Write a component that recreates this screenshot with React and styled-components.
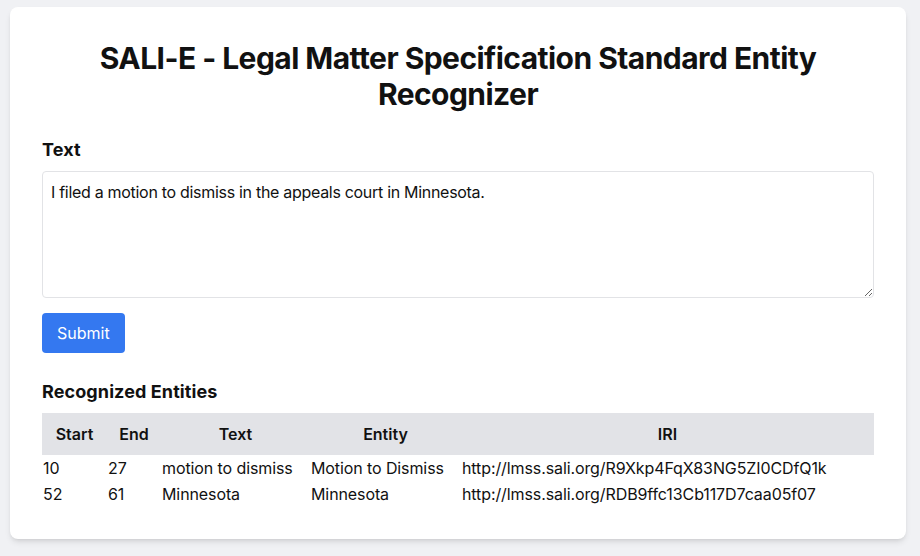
import React, { useState } from 'react';
import styled, { createGlobalStyle } from 'styled-components';

const GlobalStyle = createGlobalStyle`
  * { box-sizing: border-box; }
  body {
    margin: 0;
    background: #f0f1f4;
    font-family: Inter, "Liberation Sans", sans-serif;
    color: #111;
  }
`;

const Page = styled.div`
  padding: 7px 14px 18px 10px;
`;

const Card = styled.div`
  width: 896px;
  background: #fff;
  border-radius: 8px;
  box-shadow: 0 4px 6px -1px rgba(0, 0, 0, 0.1), 0 2px 4px -2px rgba(0, 0, 0, 0.1);
  padding: 33px 32px 32px;
`;

const Title = styled.h1`
  margin: 0 0 24px;
  font-size: 30px;
  line-height: 36px;
  font-weight: 700;
  text-align: center;
  letter-spacing: -0.55px;
`;

const Label = styled.h2`
  margin: 0 0 7px;
  font-size: 18px;
  line-height: 28px;
  font-weight: 700;
  letter-spacing: 0.1px;
`;

const TextArea = styled.textarea`
  display: block;
  width: 100%;
  height: 127px;
  padding: 8px;
  border: 1px solid #e2e3e6;
  border-radius: 4px;
  font-family: inherit;
  font-size: 16px;
  line-height: 24px;
  letter-spacing: -0.3px;
  color: #111;
  resize: vertical;
  outline: none;
`;

const Button = styled.button`
  margin-top: 15px;
  height: 40px;
  padding: 0 15px;
  border: none;
  border-radius: 4px;
  background: #3478f0;
  color: #fff;
  font-family: inherit;
  font-size: 16px;
  cursor: pointer;
`;

const Section = styled.div`
  margin-top: 25px;
`;

const Table = styled.table`
  width: 100%;
  table-layout: fixed;
  border-collapse: collapse;
  font-size: 16px;
  margin-top: 7px;
`;

const Th = styled.th`
  width: ${p => p.$w}px;
  background: #e2e3e7;
  height: 42px;
  padding: 0 4px;
  font-weight: 600;
  text-align: center;
  line-height: 24px;
`;

const Td = styled.td`
  padding: 1px 2px 1px 1px;
  line-height: 24px;
  white-space: nowrap;
  text-align: left;
  letter-spacing: -0.1px;
`;

const columns = [
  { label: 'Start', w: 65 },
  { label: 'End', w: 54 },
  { label: 'Text', w: 149 },
  { label: 'Entity', w: 151 },
  { label: 'IRI' },
];

const entities = [
  { start: 10, end: 27, text: 'motion to dismiss', entity: 'Motion to Dismiss', iri: 'http://lmss.sali.org/R9Xkp4FqX83NG5ZI0CDfQ1k' },
  { start: 52, end: 61, text: 'Minnesota', entity: 'Minnesota', iri: 'http://lmss.sali.org/RDB9ffc13Cb117D7caa05f07' },
];

export default function App() {
  const [text, setText] = useState('I filed a motion to dismiss in the appeals court in Minnesota.');
  return (
    <Page>
      <GlobalStyle />
      <Card>
        <Title>SALI-E - Legal Matter Specification Standard Entity Recognizer</Title>
        <Label>Text</Label>
        <TextArea value={text} onChange={e => setText(e.target.value)} />
        <Button>Submit</Button>
        <Section>
          <Label>Recognized Entities</Label>
          <Table>
            <thead>
              <tr>
                {columns.map(c => <Th key={c.label} $w={c.w}>{c.label}</Th>)}
              </tr>
            </thead>
            <tbody>
              {entities.map(e => (
                <tr key={e.start}>
                  <Td>{e.start}</Td>
                  <Td>{e.end}</Td>
                  <Td>{e.text}</Td>
                  <Td>{e.entity}</Td>
                  <Td>{e.iri}</Td>
                </tr>
              ))}
            </tbody>
          </Table>
        </Section>
      </Card>
    </Page>
  );
}
